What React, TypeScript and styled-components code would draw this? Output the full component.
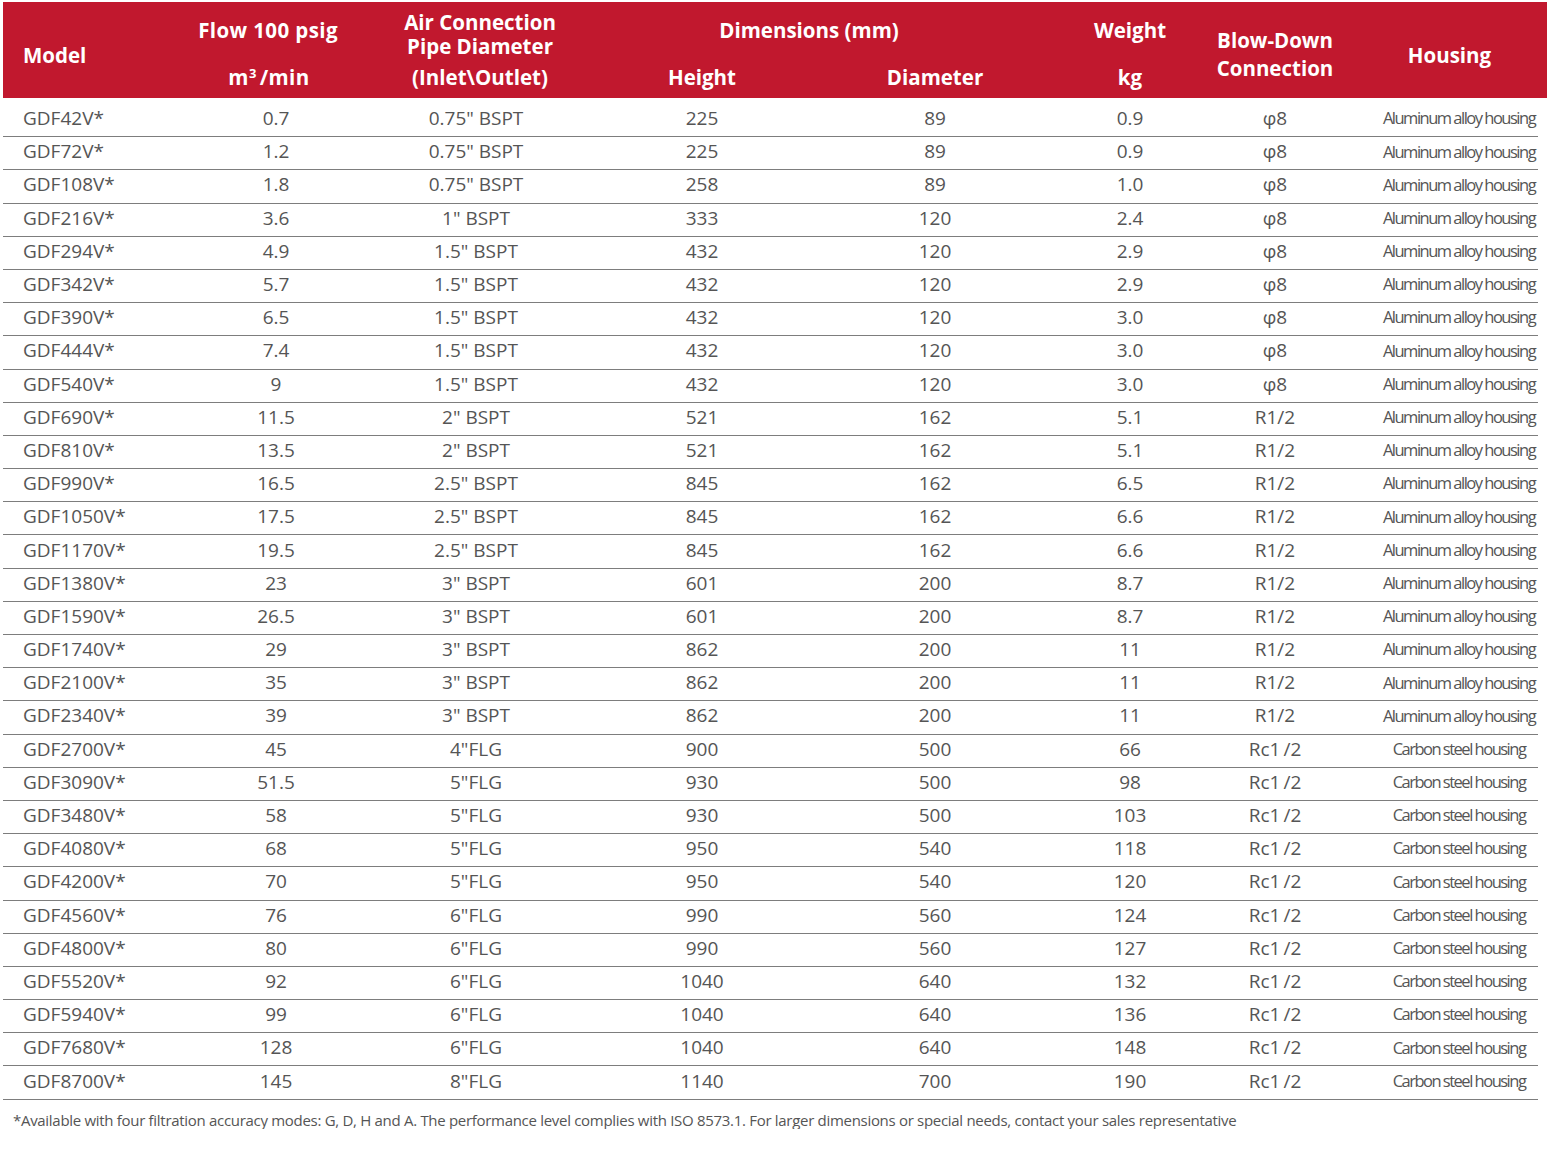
import React from "react";
import styled, { createGlobalStyle } from "styled-components";

const GlobalStyle = createGlobalStyle`
  html, body { margin: 0; padding: 0; background: #ffffff; }
  body { font-family: "Open Sans", "Noto Sans", sans-serif; }
`;

const COLS = "211px 124px 276px 176px 290px 100px 190px 177px";
const ROW_COLS = "211px 124px 276px 176px 290px 100px 190px 168px";

const Page = styled.div`
  padding: 2px 4px 0 3px;
  width: 1544px;
`;

const Header = styled.div`
  display: grid;
  grid-template-columns: ${COLS};
  grid-template-rows: 54px 42px;
  background: #c1182e;
  color: #ffffff;
  font-family: "Open Sans", "Noto Sans", sans-serif;
  font-weight: 700;
  font-size: 20.5px;
  line-height: 24px;
`;

const HCell = styled.div<{
  $col: string;
  $row: string;
  $align?: "start" | "center";
  $pl?: number;
  $pr?: number;
  $pt?: number;
  $pb?: number;
  $valign?: "center" | "start" | "end";
  $lh?: number;
  $ls?: number;
}>`
  grid-column: ${(p) => p.$col};
  grid-row: ${(p) => p.$row};
  display: flex;
  flex-direction: column;
  align-items: ${(p) => (p.$align === "start" ? "flex-start" : "center")};
  justify-content: ${(p) =>
    p.$valign === "start" ? "flex-start" : p.$valign === "end" ? "flex-end" : "center"};
  padding: ${(p) => p.$pt ?? 0}px ${(p) => p.$pr ?? 0}px ${(p) => p.$pb ?? 0}px
    ${(p) => p.$pl ?? 0}px;
  line-height: ${(p) => p.$lh ?? 24}px;
  letter-spacing: ${(p) => p.$ls ?? 0}px;
  white-space: nowrap;
  text-align: center;
`;

const Sup = styled.sup`
  font-size: 13px;
  line-height: 0;
  vertical-align: 7px;
  margin-right: 3px;
`;

const Body = styled.div`
  padding-top: 6px;
`;

const Row = styled.div`
  display: grid;
  grid-template-columns: ${ROW_COLS};
  height: 33.2px;
  box-sizing: border-box;
  border-bottom: 1px solid #7d7d7d;
  padding-bottom: 3px;
  width: 1535px;
  color: #555555;
  font-family: "Open Sans", "Noto Sans", sans-serif;
  font-size: 19px;
  line-height: 1;
`;

const Cell = styled.div<{ $left?: boolean }>`
  display: flex;
  align-items: center;
  justify-content: ${(p) => (p.$left ? "flex-start" : "center")};
  padding-left: ${(p) => (p.$left ? "20px" : "0")};
  white-space: nowrap;
`;

const HousingCell = styled.div`
  display: flex;
  align-items: center;
  justify-content: center;
  padding-left: 10px;
  white-space: nowrap;
  font-size: 16.5px;
  letter-spacing: -1.5px;
`;

const Footnote = styled.p`
  margin: 11px 0 0 10px;
  color: #555555;
  font-family: "Open Sans", "Noto Sans", sans-serif;
  font-size: 15px;
  letter-spacing: -0.3px;
  line-height: 18px;
  white-space: nowrap;
`;

type R = [string, string, string, string, string, string, string, string];

const ALU = "Aluminum alloy housing";
const CARB = "Carbon steel housing";
const RC = "Rc1\u2009/2";

const rows: R[] = [
  ["GDF42V*", "0.7", '0.75" BSPT', "225", "89", "0.9", "φ8", ALU],
  ["GDF72V*", "1.2", '0.75" BSPT', "225", "89", "0.9", "φ8", ALU],
  ["GDF108V*", "1.8", '0.75" BSPT', "258", "89", "1.0", "φ8", ALU],
  ["GDF216V*", "3.6", '1" BSPT', "333", "120", "2.4", "φ8", ALU],
  ["GDF294V*", "4.9", '1.5" BSPT', "432", "120", "2.9", "φ8", ALU],
  ["GDF342V*", "5.7", '1.5" BSPT', "432", "120", "2.9", "φ8", ALU],
  ["GDF390V*", "6.5", '1.5" BSPT', "432", "120", "3.0", "φ8", ALU],
  ["GDF444V*", "7.4", '1.5" BSPT', "432", "120", "3.0", "φ8", ALU],
  ["GDF540V*", "9", '1.5" BSPT', "432", "120", "3.0", "φ8", ALU],
  ["GDF690V*", "11.5", '2" BSPT', "521", "162", "5.1", "R1/2", ALU],
  ["GDF810V*", "13.5", '2" BSPT', "521", "162", "5.1", "R1/2", ALU],
  ["GDF990V*", "16.5", '2.5" BSPT', "845", "162", "6.5", "R1/2", ALU],
  ["GDF1050V*", "17.5", '2.5" BSPT', "845", "162", "6.6", "R1/2", ALU],
  ["GDF1170V*", "19.5", '2.5" BSPT', "845", "162", "6.6", "R1/2", ALU],
  ["GDF1380V*", "23", '3" BSPT', "601", "200", "8.7", "R1/2", ALU],
  ["GDF1590V*", "26.5", '3" BSPT', "601", "200", "8.7", "R1/2", ALU],
  ["GDF1740V*", "29", '3" BSPT', "862", "200", "11", "R1/2", ALU],
  ["GDF2100V*", "35", '3" BSPT', "862", "200", "11", "R1/2", ALU],
  ["GDF2340V*", "39", '3" BSPT', "862", "200", "11", "R1/2", ALU],
  ["GDF2700V*", "45", '4"FLG', "900", "500", "66", RC, CARB],
  ["GDF3090V*", "51.5", '5"FLG', "930", "500", "98", RC, CARB],
  ["GDF3480V*", "58", '5"FLG', "930", "500", "103", RC, CARB],
  ["GDF4080V*", "68", '5"FLG', "950", "540", "118", RC, CARB],
  ["GDF4200V*", "70", '5"FLG', "950", "540", "120", RC, CARB],
  ["GDF4560V*", "76", '6"FLG', "990", "560", "124", RC, CARB],
  ["GDF4800V*", "80", '6"FLG', "990", "560", "127", RC, CARB],
  ["GDF5520V*", "92", '6"FLG', "1040", "640", "132", RC, CARB],
  ["GDF5940V*", "99", '6"FLG', "1040", "640", "136", RC, CARB],
  ["GDF7680V*", "128", '6"FLG', "1040", "640", "148", RC, CARB],
  ["GDF8700V*", "145", '8"FLG', "1140", "700", "190", RC, CARB],
];

export default function App() {
  return (
    <>
      <GlobalStyle />
      <Page>
        <Header>
          <HCell $col="1" $row="1 / 3" $align="start" $pl={20} $pt={10}>
            Model
          </HCell>
          <HCell $col="2" $row="1" $pr={16} $pt={2} $ls={0.4}>
            Flow 100 psig
          </HCell>
          <HCell $col="2" $row="2" $pr={14} $ls={0.4}>
            <span>
              m<Sup>3</Sup>/min
            </span>
          </HCell>
          <HCell $col="3" $row="1" $pl={8} $valign="start" $pt={8}>
            <span>
              Air Connection
              <br />
              Pipe Diameter
            </span>
          </HCell>
          <HCell $col="3" $row="2" $pl={8}>
            (Inlet\Outlet)
          </HCell>
          <HCell $col="4 / 6" $row="1" $pr={76} $pt={2}>
            Dimensions (mm)
          </HCell>
          <HCell $col="4" $row="2">
            Height
          </HCell>
          <HCell $col="5" $row="2">
            Diameter
          </HCell>
          <HCell $col="6" $row="1" $pt={2}>
            Weight
          </HCell>
          <HCell $col="6" $row="2">
            kg
          </HCell>
          <HCell $col="7" $row="1 / 3" $pt={8} $lh={28}>
            <span>
              Blow-Down
              <br />
              Connection
            </span>
          </HCell>
          <HCell $col="8" $row="1 / 3" $pr={18} $pt={10}>
            Housing
          </HCell>
        </Header>
        <Body>
          {rows.map((r) => (
            <Row key={r[0]}>
              <Cell $left>{r[0]}</Cell>
              <Cell>{r[1]}</Cell>
              <Cell>{r[2]}</Cell>
              <Cell>{r[3]}</Cell>
              <Cell>{r[4]}</Cell>
              <Cell>{r[5]}</Cell>
              <Cell>{r[6]}</Cell>
              <HousingCell>{r[7]}</HousingCell>
            </Row>
          ))}
        </Body>
        <Footnote>
          *Available with four filtration accuracy modes: G, D, H and A. The performance level
          complies with ISO 8573.1. For larger dimensions or special needs, contact your sales
          representative
        </Footnote>
      </Page>
    </>
  );
}
